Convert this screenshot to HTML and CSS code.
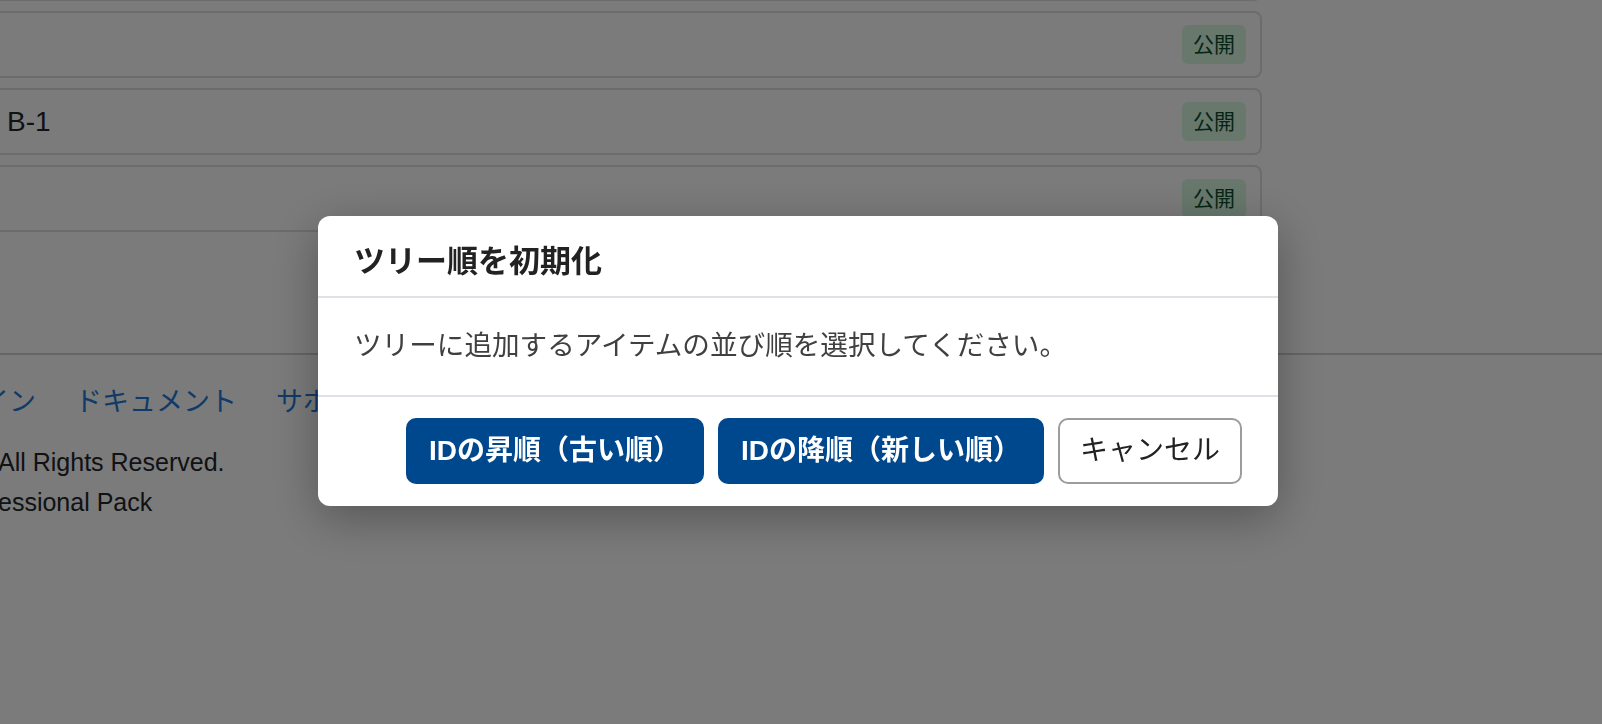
FILE: index.html
```html
<!DOCTYPE html>
<html lang="ja">
<head>
  <meta charset="UTF-8">
  <meta name="viewport" content="width=device-width, initial-scale=1.0">
  <title>ツリー順を初期化</title>
  <link rel="stylesheet" href="styles.css">
</head>
<body>
  <div class="page">
    <ul class="tree-list">
      <li class="tree-item"><span class="item-title"></span></li>
      <li class="tree-item"><span class="item-title"></span><span class="badge">公開</span></li>
      <li class="tree-item"><span class="item-title">B-1</span><span class="badge">公開</span></li>
      <li class="tree-item"><span class="item-title"></span><span class="badge">公開</span></li>
    </ul>

    <footer class="site-footer">
      <nav class="footer-nav">
        <a href="#">プラグイン</a>
        <a href="#">ドキュメント</a>
        <a href="#">サポート</a>
      </nav>
      <p class="copyright">All Rights Reserved.</p>
      <p class="edition">essional Pack</p>
    </footer>
  </div>

  <!-- modal -->
  <div class="backdrop"></div>
  <div class="modal-wrap">
    <div class="modal">
      <div class="modal-header">
        <h5 class="modal-title">ツリー順を初期化</h5>
      </div>
      <div class="modal-body">
        <p>ツリーに追加するアイテムの並び順を選択してください。</p>
      </div>
      <div class="modal-footer">
        <button type="button" class="btn btn-primary">IDの昇順（古い順）</button>
        <button type="button" class="btn btn-primary">IDの降順（新しい順）</button>
        <button type="button" class="btn btn-cancel">キャンセル</button>
      </div>
    </div>
  </div>
</body>
</html>
```

FILE: styles.css
```css
html, body {
  margin: 0;
  padding: 0;
  background-color: #f6f6f6;
}

body {
  font-family: "Liberation Sans", "Noto Sans CJK JP", sans-serif;
  color: #212529;
  overflow: hidden;
}

/* tree list (behind the modal) */
.tree-list {
  list-style: none;
  margin: -66px 0 0 -20px;
  padding: 0;
  width: 1282px;
  display: flex;
  flex-direction: column;
  gap: 10px;
}

.tree-item {
  height: 67px;
  box-sizing: border-box;
  border: 2px solid #d9d9d9;
  border-radius: 8px;
  display: flex;
  align-items: center;
  justify-content: space-between;
  padding: 0 14px 0 25px;
}

.item-title {
  font-size: 28px;
}

.badge {
  font-size: 21px;
  line-height: 23px;
  padding: 8px 11px;
  border-radius: 6px;
  background-color: #d0f0da;
  color: #0f4a2c;
}

/* footer */
.site-footer {
  margin-top: 121px;
  border-top: 2px solid #cbcbcb;
  padding-top: 27px;
}

.footer-nav {
  display: flex;
  gap: 39px;
  margin-left: -99px;
  font-size: 27px;
  line-height: 40px;
}

.footer-nav a {
  color: #2074d2;
  text-decoration: none;
}

.copyright,
.edition {
  font-size: 25px;
  line-height: 40px;
  margin: 0 0 0 -2px;
}

.copyright {
  margin-top: 20px;
}

/* modal */
.backdrop {
  position: fixed;
  inset: 0;
  background-color: rgba(0, 0, 0, 0.5);
}

.modal-wrap {
  position: fixed;
  inset: 0;
  display: flex;
  align-items: center;
  justify-content: center;
  padding: 0 6px 2px 0;
}

.modal {
  width: 960px;
  background-color: #fff;
  border-radius: 12px;
  box-shadow: 0 12px 48px rgba(0, 0, 0, 0.3);
  overflow: hidden;
}

.modal-header {
  padding: 27px 36px 15px;
  border-bottom: 2px solid #dee2e6;
}

.modal-title {
  margin: 0;
  font-size: 31px;
  line-height: 38px;
  font-weight: bold;
  color: #222;
}

.modal-body {
  padding: 28px 36px 29px;
  border-bottom: 2px solid #dee2e6;
}

.modal-body p {
  margin: 0;
  font-size: 27.6px;
  line-height: 40px;
  color: #404040;
}

.modal-footer {
  display: flex;
  justify-content: flex-end;
  gap: 14px;
  padding: 21px 36px 22px;
}

.btn {
  font-family: inherit;
  font-size: 28px;
  line-height: 38px;
  padding: 12px 21px;
  border-radius: 10px;
  border: 2px solid transparent;
  cursor: pointer;
}

.btn-primary {
  background-color: #00488e;
  border-color: #00488e;
  color: #fff;
  font-weight: bold;
}

.btn-cancel {
  background-color: #fff;
  border-color: #9c9c9c;
  color: #222;
  padding: 12px 20px;
}
```
